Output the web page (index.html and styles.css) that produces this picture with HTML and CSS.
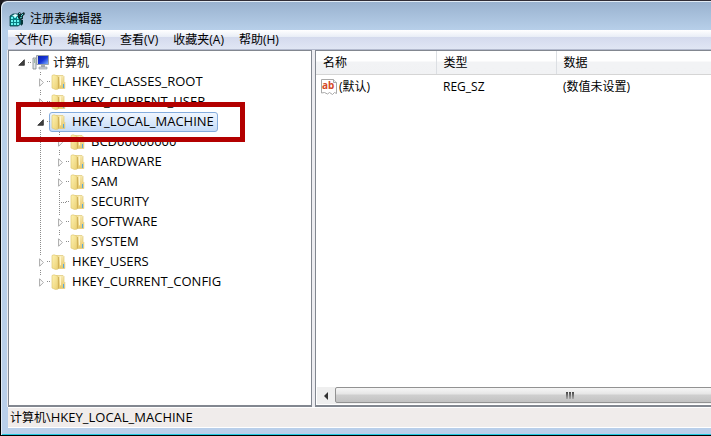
FILE: index.html
```html
<!DOCTYPE html>
<html lang="zh-CN">
<head>
<meta charset="utf-8">
<title>注册表编辑器</title>
<link rel="stylesheet" href="styles.css">
</head>
<body>
<svg class="defs" aria-hidden="true">
  <defs>
    <linearGradient id="flap" x1="0" x2="1" y1="0" y2="1"><stop offset="0" stop-color="#fff3b2"/><stop offset="1" stop-color="#ead074"/></linearGradient>
    <linearGradient id="back" x1="0" x2="0" y1="0" y2="1"><stop offset="0" stop-color="#f8eab4"/><stop offset="1" stop-color="#e6c868"/></linearGradient>
    <linearGradient id="screen" x1="0" x2="1" y1="0" y2="1"><stop offset="0" stop-color="#0a20a8"/><stop offset=".5" stop-color="#1634d8"/><stop offset="1" stop-color="#7fb4ff"/></linearGradient>
    <symbol id="folder" viewBox="0 0 15 16">
      <path d="M5 1.500h7l1 1v5l.8.8v6.200H5z" fill="url(#back)" stroke="#dfc877" stroke-width=".7"/>
      <path d="M1 1.500 3 .8l4 1.400v12.900l-2.500.4L1 14z" fill="url(#flap)" stroke="#e0c873" stroke-width=".7"/>
      <path d="M7.500 3v11.500" stroke="#cfae55" stroke-width=".9"/>
      <path d="M9.500 2.300v9" stroke="#fff6cc"/>
      <path d="M12.500 10v4" stroke="#58a8dc"/>
    </symbol>
    <symbol id="closed" viewBox="0 0 14 16"><path d="M5.500 4v8l4-4z" fill="#fff" stroke="#a3a3a3"/></symbol>
    <symbol id="open" viewBox="0 0 14 16"><path d="M9.500 5v6h-6z" fill="#404040" stroke="#262626" stroke-width=".8"/></symbol>
  </defs>
</svg>
<div class="window">
  <header class="titlebar">
    <svg class="app-icon" viewBox="0 0 17 16">
      <path d="M1 5l3-2h5l3 3v7l-3 2H1z" fill="#087f83" stroke="#0b4347" stroke-width=".8"/>
      <path d="M2 6h2v2H2zm3-1h2v2H5zm3 1h2v2H8zM2 9h2v2H2zm3 0h2v2H5zm3 0h2v2H8zm-6 3h2v2H2zm3 0h2v2H5zm3 0h2v2H8z" fill="#68f4f0"/>
      <path d="M3 5l3-2 3 1-2 2z" fill="#e4ffff"/>
      <path d="M9 2l2-1 1 2 3-2 1 2-2 2v3l-3 1-2-2z" fill="#102c30"/>
      <path d="M10 3l1-1M12 5l2-2M11 7l2-1" stroke="#56dedc"/>
      <path d="M12 9h2v4l-2 2z" fill="#05363a"/>
    </svg>
    <h1>注册表编辑器</h1>
  </header>
  <nav class="menubar">
    <button type="button">文件(F)</button>
    <button type="button">编辑(E)</button>
    <button type="button">查看(V)</button>
    <button type="button">收藏夹(A)</button>
    <button type="button">帮助(H)</button>
  </nav>
  <main class="panes">
    <section class="tree-pane">
      <ul class="tree root">
        <li>
          <div class="row"><button type="button" class="expander" aria-label="折叠"><svg><use href="#open"/></svg></button><button type="button" class="node cjk">
            <svg class="computer" viewBox="0 0 18 16">
              <path d="M1 4h3v11H1z" fill="#e2e6e8" stroke="#7d878c" stroke-width=".8"/><path d="M2 6h1M2 8h1" stroke="#5f8f62"/>
              <path d="M4.500 1.500h12v9h-12z" fill="#d6dbdf" stroke="#9aa3aa"/>
              <path d="M6 2h10v8H6z" fill="url(#screen)"/>
              <path d="M9 11h4v2H9z" fill="#a5acb2"/><path d="M7 13h8v2H7z" fill="#cdd2d6" stroke="#8f989f" stroke-width=".6"/>
            </svg><span>计算机</span></button></div>
          <ul class="tree">
            <li><div class="row"><button type="button" class="expander" aria-label="展开"><svg><use href="#closed"/></svg></button><button type="button" class="node"><svg><use href="#folder"/></svg><span>HKEY_CLASSES_ROOT</span></button></div></li>
            <li><div class="row"><button type="button" class="expander" aria-label="展开"><svg><use href="#closed"/></svg></button><button type="button" class="node"><svg><use href="#folder"/></svg><span>HKEY_CURRENT_USER</span></button></div></li>
            <li>
              <div class="row marked"><button type="button" class="expander" aria-label="折叠"><svg><use href="#open"/></svg></button><button type="button" class="node selected"><svg><use href="#folder"/></svg><span>HKEY_LOCAL_MACHINE</span></button></div>
              <ul class="tree">
                <li><div class="row"><button type="button" class="expander" aria-label="展开"><svg><use href="#closed"/></svg></button><button type="button" class="node"><svg><use href="#folder"/></svg><span>BCD00000000</span></button></div></li>
                <li><div class="row"><button type="button" class="expander" aria-label="展开"><svg><use href="#closed"/></svg></button><button type="button" class="node"><svg><use href="#folder"/></svg><span>HARDWARE</span></button></div></li>
                <li><div class="row"><button type="button" class="expander" aria-label="展开"><svg><use href="#closed"/></svg></button><button type="button" class="node"><svg><use href="#folder"/></svg><span>SAM</span></button></div></li>
                <li><div class="row"><span class="leaf"></span><button type="button" class="node"><svg><use href="#folder"/></svg><span>SECURITY</span></button></div></li>
                <li><div class="row"><button type="button" class="expander" aria-label="展开"><svg><use href="#closed"/></svg></button><button type="button" class="node"><svg><use href="#folder"/></svg><span>SOFTWARE</span></button></div></li>
                <li><div class="row"><button type="button" class="expander" aria-label="展开"><svg><use href="#closed"/></svg></button><button type="button" class="node"><svg><use href="#folder"/></svg><span>SYSTEM</span></button></div></li>
              </ul>
            </li>
            <li><div class="row"><button type="button" class="expander" aria-label="展开"><svg><use href="#closed"/></svg></button><button type="button" class="node"><svg><use href="#folder"/></svg><span>HKEY_USERS</span></button></div></li>
            <li><div class="row"><button type="button" class="expander" aria-label="展开"><svg><use href="#closed"/></svg></button><button type="button" class="node"><svg><use href="#folder"/></svg><span>HKEY_CURRENT_CONFIG</span></button></div></li>
          </ul>
        </li>
      </ul>
    </section>
    <section class="value-pane">
      <table>
        <thead><tr><th class="name">名称</th><th class="type">类型</th><th>数据</th></tr></thead>
        <tbody><tr>
          <td><span class="value"><svg viewBox="0 0 16 16"><path d="M.5.500h12l3 3v11l-2-1-2 2-3-2-2 1.500-3-1.500-3 .5z" fill="#fff" stroke="#a9a9a9"/><path d="M12.500.500v3h3" fill="#eee" stroke="#a9a9a9"/><text x="1" y="10">ab</text></svg>(默认)</span></td>
          <td>REG_SZ</td>
          <td>(数值未设置)</td>
        </tr></tbody>
      </table>
      <div class="scrollbar">
        <button type="button" class="arrow" aria-label="向左滚动"><svg viewBox="0 0 4 8"><path d="M4 0v8L0 4z" fill="#333"/></svg></button>
        <div class="track"><div class="thumb"><i></i><i></i><i></i></div></div>
      </div>
    </section>
  </main>
  <footer class="statusbar">计算机<span class="path">\HKEY_LOCAL_MACHINE</span></footer>
</div>
</body>
</html>
```
FILE: styles.css
```css
*, *::before, *::after { box-sizing: border-box; }

body {
  margin: 0;
  background: #1c1a20;
  color: #000;
  font: 12px/20px "Open Sans", "Noto Sans CJK SC", sans-serif;
  overflow: hidden;
}

button {
  margin: 0;
  padding: 0;
  border: 0;
  background: none;
  color: inherit;
  font: inherit;
}

svg { display: block; flex: none; }
.defs { position: absolute; width: 0; height: 0; }

.window {
  display: flex;
  flex-direction: column;
  height: 100vh;
  padding: 1px 0 7px 6px;
  border: solid #000;
  border-width: 1px 0 1px 1px;
  border-top-color: #302d36;
  border-top-left-radius: 7px;
  background: linear-gradient(#98b1ce, #b8d0ea 30px, #b9cfea);
  box-shadow: inset 1px 1px #e1ebf5, inset 0 -1px #20c8df;
}

.titlebar {
  display: flex;
  align-items: center;
  gap: 4px;
  flex: none;
  height: 28px;
  padding: 6px 0 0 2px;
}
.titlebar h1 { margin: 0; font-size: 12px; font-weight: 400; }
.app-icon { width: 17px; height: 16px; }

.menubar {
  display: flex;
  gap: 15px;
  flex: none;
  height: 20px;
  margin-left: 1px;
  padding-left: 7px;
  border-bottom: 1px solid #b3bace;
  background: linear-gradient(#fff, #e8edf6 7px, #d4daed 7px, #e0e6f4);
}

.panes {
  display: flex;
  flex: 1;
  min-height: 0;
  background: #ececf0;
}
.tree-pane, .value-pane {
  border: 1px solid #828790;
  border-bottom-width: 2px;
  background: #fff;
}
.tree-pane { flex: 0 0 304px; margin-left: 1px; padding-top: 1px; }
.value-pane {
  display: flex;
  flex: 1;
  flex-direction: column;
  min-width: 0;
  margin-left: 3px;
  border-right: 0;
}

.tree { margin: 0; padding: 0 0 0 19px; list-style: none; }
.tree.root { padding-left: 6px; }
.tree .tree li {
  background: repeating-linear-gradient(#8c8c8c 0 1px, transparent 1px 2px) 6px 0 / 1px 100% no-repeat;
}
.tree .tree li:last-child { background-size: 1px 10px; }
.row { display: flex; align-items: center; height: 20px; }
.expander { width: 14px; height: 15px; background: #fff; }
.expander svg { width: 14px; height: 15px; }
.leaf { width: 14px; }
.row .node::before, .leaf {
  background: repeating-linear-gradient(90deg, #8c8c8c 0 1px, transparent 1px 2px) 0 50% / 100% 1px no-repeat;
}
.leaf { height: 20px; background-position: 6px 50%; }
.node {
  display: flex;
  align-items: center;
  gap: 6px;
  position: relative;
  height: 20px;
  margin-left: 1px;
  padding: 0 3px 1px 1px;
  border: 1px solid transparent;
  border-radius: 3px;
  font-size: 13px;
  line-height: 17px;
}
.node::before { content: ""; position: absolute; left: -3px; width: 4px; height: 1px; }
.node svg { width: 15px; height: 16px; }
.node .computer { width: 18px; }
.node.cjk { gap: 3px; padding-bottom: 0; font-size: 12px; }
.node.selected { border-color: #84acdd; background: linear-gradient(#f0f6fe, #c5dcf8); }

.marked { position: relative; }
.marked::after {
  content: "";
  position: absolute;
  top: -10px;
  left: -18px;
  z-index: 2;
  width: 229px;
  height: 40px;
  border: 5px solid #b30000;
  pointer-events: none;
}

table { width: 100%; border-collapse: collapse; table-layout: fixed; }
th, td { padding: 0 0 0 7px; font-weight: 400; text-align: left; white-space: nowrap; }
th {
  height: 23px;
  padding-top: 2px;
  border-right: 1px solid #dcdfe3;
  border-bottom: 1px solid #d5d5d5;
  background: linear-gradient(#fff 10px, #f2f3f5 11px, #f1f2f4);
}
th:last-child { border-right: 0; }
th.name, th.type { width: 120px; }
td { height: 25px; }
td:first-child { padding-left: 5px; }
.value { display: flex; align-items: center; gap: 2px; }
.value svg { width: 16px; height: 16px; }
.value text { fill: #d44a28; font: bold 10px "Noto Sans", sans-serif; }

.scrollbar {
  display: flex;
  height: 17px;
  margin: auto 0 1px 1px;
  background: #efefef;
}
.arrow { display: flex; align-items: center; justify-content: center; width: 18px; }
.arrow svg { width: 4px; height: 8px; }
.track { flex: 1; overflow: hidden; }
.thumb {
  display: flex;
  align-items: center;
  justify-content: center;
  gap: 1px;
  width: 125%;
  height: 16px;
  border: 1px solid #929292;
  border-radius: 2px;
  background: linear-gradient(#f6f6f6, #e6e6e6 6px, #cfcfcf 7px, #c2c2c2);
}
.thumb i { width: 2px; height: 7px; background: linear-gradient(#444, #aaa); }

.statusbar {
  flex: none;
  height: 21px;
  margin-left: 1px;
  padding-left: 2px;
  border: solid #fff;
  border-width: 1px 0;
  background: #f0eceb;
  line-height: 19px;
}
.path { font-size: 13px; }
```
